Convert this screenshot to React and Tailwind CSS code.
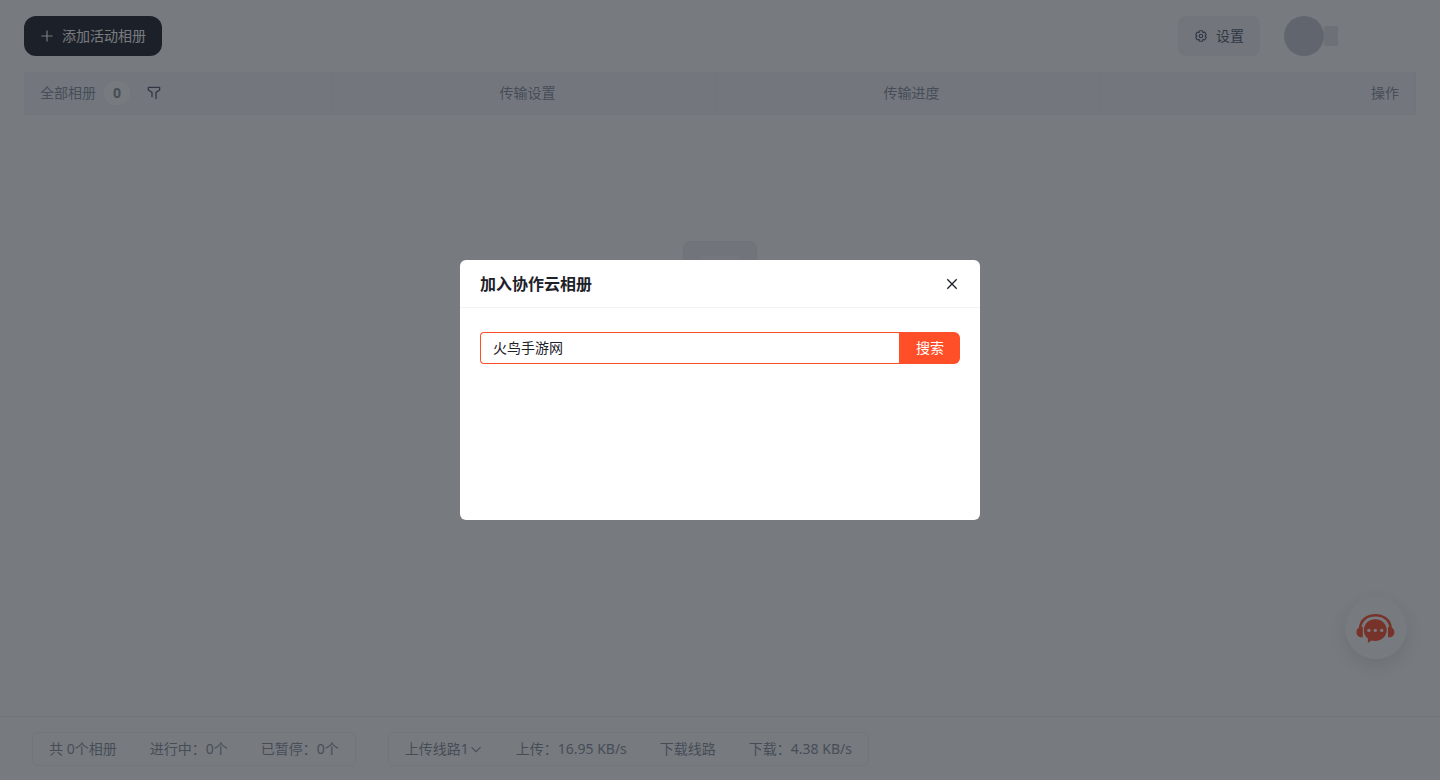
import { useState } from "react";

function Icon({ children, className = "size-3.5" }) {
  return (
    <svg viewBox="0 0 48 48" fill="none" stroke="currentColor" strokeWidth="4" className={className} aria-hidden="true">
      {children}
    </svg>
  );
}

function PlusIcon() {
  return <Icon><path d="M5 24h38M24 5v38" /></Icon>;
}

function FilterIcon() {
  return (
    <Icon className="size-4">
      <path d="M30 42V22.549a1 1 0 0 1 .463-.844l10.074-6.41A1 1 0 0 0 41 14.45V8a1 1 0 0 0-1-1H8a1 1 0 0 0-1 1v6.451a1 1 0 0 0 .463.844l10.074 6.41a1 1 0 0 1 .463.844V37" />
    </Icon>
  );
}

function SettingsIcon() {
  return (
    <Icon>
      <path d="M18.797 6.732A1 1 0 0 1 19.76 6h8.48a1 1 0 0 1 .964.732l1.285 4.628a1 1 0 0 0 1.213.7l4.651-1.2a1 1 0 0 1 1.116.468l4.24 7.344a1 1 0 0 1-.153 1.2L38.193 23.3a1 1 0 0 0 0 1.402l3.364 3.427a1 1 0 0 1 .153 1.2l-4.24 7.344a1 1 0 0 1-1.116.468l-4.65-1.2a1 1 0 0 0-1.214.7l-1.285 4.628a1 1 0 0 1-.964.732h-8.48a1 1 0 0 1-.963-.732L17.51 36.64a1 1 0 0 0-1.213-.7l-4.65 1.2a1 1 0 0 1-1.116-.468l-4.24-7.344a1 1 0 0 1 .153-1.2L9.809 24.7a1 1 0 0 0 0-1.402l-3.364-3.427a1 1 0 0 1-.153-1.2l4.24-7.344a1 1 0 0 1 1.116-.468l4.65 1.2a1 1 0 0 0 1.213-.7l1.286-4.628Z" />
      <path d="M30 24a6 6 0 1 1-12 0 6 6 0 0 1 12 0Z" />
    </Icon>
  );
}

function SupportIcon() {
  return (
    <svg viewBox="0 0 40 30" className="h-[30px] w-10" aria-hidden="true">
      <path d="M4.200 15C4.600 7.400 10.600 2.200 19.400 2.200S34.200 7.400 34.600 15" fill="none" stroke="#ff4f28" strokeWidth="2.600" />
      <path d="M6.800 14v10.200H5.200C2.400 24.200.5 22 .5 19.200S2.400 14 5.200 14ZM32 14v10.200h1.600c2.800 0 4.800-2.200 4.800-5s-2-5.200-4.800-5.200Z" fill="#ff4f28" />
      <path d="M19.300 6.300C12.900 6.300 7.900 11 7.900 17.100c0 3.900 1.500 6.700 4 8.500v4.400l3.500-2.400c1.300.3 2.500.4 3.900.4 6.400 0 11.400-4.800 11.400-10.900S25.700 6.300 19.300 6.300Z" fill="#ff4f28" />
      <circle cx="12.900" cy="17.400" r="1.700" fill="#fff" />
      <circle cx="19.300" cy="17.400" r="1.700" fill="#fff" />
      <circle cx="25.700" cy="17.400" r="1.700" fill="#fff" />
    </svg>
  );
}

function Toolbar() {
  return (
    <header className="flex items-center justify-between px-6 py-4">
      <button type="button" className="flex h-10 items-center gap-2 rounded-xl bg-[#1d2129] px-4 text-white">
        <PlusIcon />
        添加活动相册
      </button>
      <div className="flex items-center gap-6 pr-[78px]">
        <button type="button" className="flex h-10 items-center gap-2 rounded-lg bg-[#f2f3f8] px-4 text-[#4e5969]">
          <SettingsIcon />
          设置
        </button>
        <div className="flex items-center">
          <div className="size-10 rounded-full bg-[#c9cdd4]" />
          <div className="h-5 w-3.5 bg-[#e5e6eb]" />
        </div>
      </div>
    </header>
  );
}

function AlbumTable() {
  return (
    <div className="px-6">
      <table className="w-full table-fixed border-separate border-spacing-0 text-[#86909c]">
        <thead>
          <tr className="h-[43px] bg-[#f5f6fb]">
            <th className="w-[308px] border-r border-b border-[#f0f1f5] px-4 text-left font-normal">
              <div className="flex items-center">
                全部相册
                <span className="ml-2 flex h-6 w-[26px] items-center justify-center rounded-full bg-white font-bold">0</span>
                <button type="button" aria-label="筛选" className="ml-4 text-[#4e5969]"><FilterIcon /></button>
              </div>
            </th>
            <th className="w-96 border-r border-b border-[#f0f1f5] pl-2 font-normal">传输设置</th>
            <th className="w-96 border-r border-b border-[#f0f1f5] pl-2 font-normal">传输进度</th>
            <th className="border-r border-b border-[#f0f1f5] px-4 text-right font-normal">操作</th>
          </tr>
        </thead>
      </table>
    </div>
  );
}

function EmptyState() {
  return (
    <div className="flex flex-1 items-start justify-center pt-[126px]">
      <svg viewBox="0 0 76 96" className="h-24 w-[76px]" aria-hidden="true">
        <rect x="1.500" y="0.500" width="73" height="94" rx="7" fill="#eff0f5" stroke="#ebecf0" />
        <rect x="18" y="15" width="40" height="4" rx="2" fill="#f7f8fa" />
      </svg>
    </div>
  );
}

function StatusBar() {
  return (
    <footer className="flex h-16 items-start gap-8 border-t border-[#eff0f3] px-8 pt-[15px] text-[#86909c]">
      <div className="flex h-[34px] items-center gap-[33px] rounded-md border border-[#f2f3f5] px-4">
        <span>共 0个相册</span>
        <span>进行中：0个</span>
        <span>已暂停：0个</span>
      </div>
      <div className="flex h-[34px] items-center gap-[33px] rounded-md border border-[#f2f3f5] px-4">
        <div className="flex items-center">
          <select aria-label="上传线路" className="field-sizing-content appearance-none bg-transparent">
            <option>上传线路1</option>
          </select>
          <Icon><path d="M39.600 17.443 24.043 33 8.487 17.443" /></Icon>
        </div>
        <span>上传：16.95 KB/s</span>
        <span>下载线路</span>
        <span>下载：4.38 KB/s</span>
      </div>
    </footer>
  );
}

function JoinAlbumDialog() {
  const [keyword, setKeyword] = useState("火鸟手游网");
  return (
    <div className="fixed inset-0 flex items-center justify-center bg-[#1d2129]/60">
      <section role="dialog" aria-modal="true" aria-labelledby="join-title" className="min-h-[260px] w-[520px] rounded-md bg-white text-[#1d2129]">
        <div className="flex h-12 items-center justify-between border-b border-[#f2f3f5] px-5">
          <h2 id="join-title" className="text-base font-bold">加入协作云相册</h2>
          <button type="button" aria-label="关闭"><Icon className="size-4"><path d="M9.857 9.858 24 24m0 0 14.142 14.142M24 24 38.142 9.858M24 24 9.857 38.142" /></Icon></button>
        </div>
        <form className="flex px-5 py-6" onSubmit={(e) => e.preventDefault()}>
          <input
            type="text"
            aria-label="相册关键字"
            value={keyword}
            onChange={(e) => setKeyword(e.target.value)}
            className="h-8 min-w-0 flex-1 rounded-l border border-r-0 border-[#ff4f28] px-3 pb-0.5 outline-none"
          />
          <button type="submit" className="h-8 rounded-r-md border-l border-[#ff4f28] bg-[#ff4f28] px-4 text-white">搜索</button>
        </form>
      </section>
    </div>
  );
}

export default function App() {
  return (
    <div className="flex min-h-screen flex-col bg-white font-['Noto_Sans','Noto_Sans_CJK_SC',sans-serif] text-sm">
      <Toolbar />
      <AlbumTable />
      <EmptyState />
      <StatusBar />
      <button type="button" aria-label="在线客服" className="fixed right-[33px] bottom-[121px] flex size-[62px] items-center justify-center rounded-full bg-white shadow-[0_6px_20px_rgba(0,0,0,0.12)]">
        <SupportIcon />
      </button>
      <JoinAlbumDialog />
    </div>
  );
}
